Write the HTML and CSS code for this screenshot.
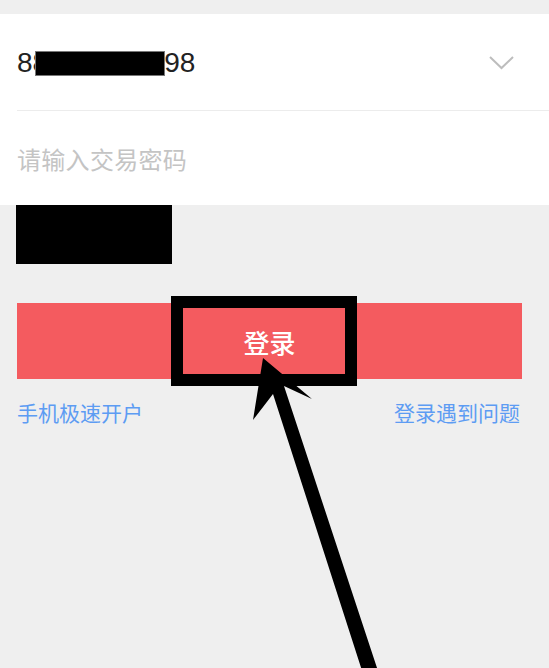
FILE: index.html
```html
<!DOCTYPE html>
<html lang="zh-CN">
<head>
<meta charset="utf-8">
<title>登录</title>
<link rel="stylesheet" href="styles.css">
</head>
<body>
<div class="page">
  <div class="card">
    <div class="row row-account">
      <div class="account">88<span class="redact-inline"></span>98</div>
      <svg class="chevron" width="25" height="14" viewBox="0 0 25 14">
        <polyline points="1,1 12.5,12 24,1" fill="none" stroke="#bdbdbd" stroke-width="2"/>
      </svg>
    </div>
    <div class="row row-password">
      <span class="placeholder">请输入交易密码</span>
    </div>
  </div>
  <div class="redact-block"></div>
  <div class="actions">
    <div class="login-btn">
      <span>登录</span>
      <div class="highlight-frame"></div>
    </div>
    <div class="links">
      <span class="link">手机极速开户</span>
      <span class="link">登录遇到问题</span>
    </div>
  </div>
  <svg class="annotation" width="549" height="668" viewBox="0 0 549 668">
    <polygon points="263,358 312,399 284,386 381,680 365,680 273,394 253,420" fill="#000"/>
  </svg>
</div>
</body>
</html>
```

FILE: styles.css
```css
html, body {
  margin: 0;
  padding: 0;
  background: #efefef;
}

body {
  font-family: "Liberation Sans", "Noto Sans CJK SC", sans-serif;
  width: 549px;
  height: 668px;
  overflow: hidden;
}

.page {
  position: relative;
  width: 549px;
  height: 668px;
  padding-top: 14px;
  box-sizing: border-box;
}

.card {
  background: #ffffff;
  padding-left: 17px;
}

.row {
  display: flex;
  align-items: center;
  box-sizing: border-box;
}

.row-account {
  height: 97px;
  border-bottom: 1px solid #ececec;
  justify-content: space-between;
  padding-right: 35px;
}

.account {
  font-size: 28px;
  color: #222222;
  line-height: 32px;
  display: flex;
  align-items: center;
  padding-top: 2px;
}

.redact-inline {
  display: inline-block;
  width: 128px;
  height: 23px;
  background: #000;
  margin-left: -12px;
  box-shadow: 0 0 0 1px #777;
}

.chevron {
  display: block;
  margin-top: 1px;
}

.row-password {
  height: 94px;
}

.placeholder {
  font-family: "Noto Sans CJK SC", sans-serif;
  font-size: 24px;
  color: #c4c4c4;
  letter-spacing: 0.3px;
}

.redact-block {
  width: 156px;
  height: 59px;
  margin-left: 16px;
  background: #000;
}

.actions {
  padding: 39px 27px 0 17px;
}

.login-btn {
  position: relative;
  height: 76px;
  background: #f45b5f;
  display: flex;
  align-items: center;
  justify-content: center;
  font-family: "Noto Sans CJK SC", sans-serif;
  font-size: 26px;
  font-weight: 500;
  color: #ffffff;
}

.highlight-frame {
  position: absolute;
  left: 154px;
  top: -7px;
  width: 186px;
  height: 90px;
  box-sizing: border-box;
  border: 12px solid #000;
}

.links {
  display: flex;
  justify-content: space-between;
  margin-top: 20px;
  padding-right: 2px;
  line-height: 26px;
}

.link {
  font-family: "Noto Sans CJK SC", sans-serif;
  font-size: 21px;
  color: #5d9cf3;
}

.annotation {
  position: absolute;
  left: 0;
  top: 0;
  pointer-events: none;
}
```
